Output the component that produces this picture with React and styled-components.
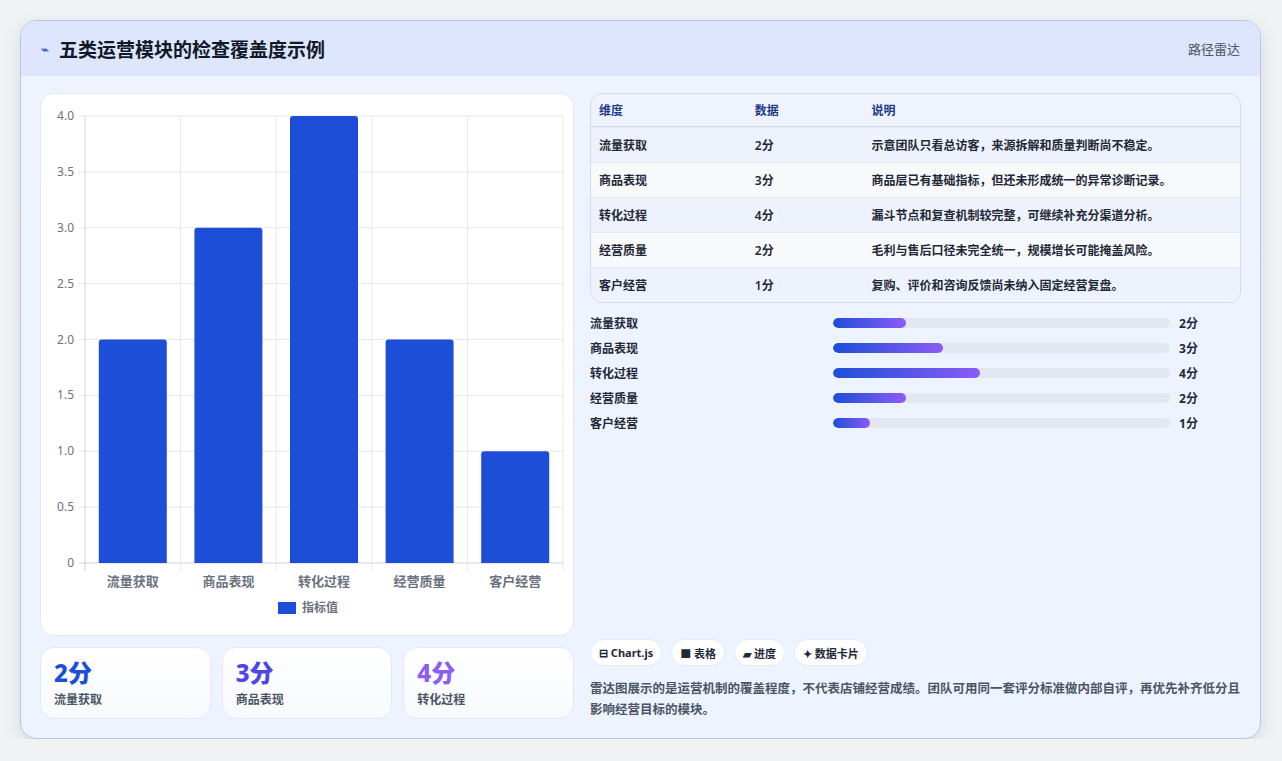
import React from "react";
import styled, { createGlobalStyle } from "styled-components";

const rows = [
  { name: "流量获取", value: 2, note: "示意团队只看总访客，来源拆解和质量判断尚不稳定。" },
  { name: "商品表现", value: 3, note: "商品层已有基础指标，但还未形成统一的异常诊断记录。" },
  { name: "转化过程", value: 4, note: "漏斗节点和复查机制较完整，可继续补充分渠道分析。" },
  { name: "经营质量", value: 2, note: "毛利与售后口径未完全统一，规模增长可能掩盖风险。" },
  { name: "客户经营", value: 1, note: "复购、评价和咨询反馈尚未纳入固定经营复盘。" },
];

const Chart = () => {
  const left = 44, right = 522, top = 22, bottom = 469;
  const step = (right - left) / 5;
  const yOf = (v) => bottom - (v / 4) * (bottom - top);
  const ticks = [0, 0.5, 1, 1.5, 2, 2.5, 3, 3.5, 4];
  return (
    <svg width="534" height="543" viewBox="0 0 534 543">
      {ticks.map((t) => (
        <g key={t}>
          <line x1={left - 6} x2={right} y1={yOf(t)} y2={yOf(t)} stroke={t === 0 ? "#cbd2dd" : "#e5e7eb"} />
          <text x={left - 11} y={yOf(t) + 4} textAnchor="end" fontSize="12" fill="#6b7280">
            {t === 0 ? "0" : t.toFixed(1)}
          </text>
        </g>
      ))}
      {[0, 1, 2, 3, 4, 5].map((i) => (
        <line key={i} x1={left + i * step} x2={left + i * step} y1={top} y2={bottom + 8} stroke={i === 0 ? "#cbd2dd" : "#e5e7eb"} />
      ))}
      {rows.map((r, i) => {
        const x = left + i * step + (step - 68) / 2;
        return (
          <g key={r.name}>
            <path d={`M${x} ${bottom} V${yOf(r.value) + 3} q0 -3 3 -3 h62 q3 0 3 3 V${bottom}Z`} fill="#1d4ed8" />
            <text x={left + i * step + step / 2} y={bottom + 23} textAnchor="middle" fontSize="13" fontWeight="600" fill="#6b7280">
              {r.name}
            </text>
          </g>
        );
      })}
      <rect x="237" y="508" width="18" height="12" fill="#1d4ed8" />
      <text x="261" y="518" fontSize="12" fontWeight="600" fill="#6b7280">指标值</text>
    </svg>
  );
};

const App = () => (
  <>
    <Global />
    <Card>
      <Header>
        <Title>
          <Spark>⌁</Spark>五类运营模块的检查覆盖度示例
        </Title>
        <Tag>路径雷达</Tag>
      </Header>
      <Body>
        <LeftCol>
          <ChartBox>
            <Chart />
          </ChartBox>
          <Stats>
            {rows.slice(0, 3).map((r, i) => (
              <Stat key={r.name}>
                <StatValue $tone={i}>{r.value}分</StatValue>
                <StatLabel>{r.name}</StatLabel>
              </Stat>
            ))}
          </Stats>
        </LeftCol>
        <RightCol>
          <Table>
            <thead>
              <tr>
                <Th style={{ width: "24%" }}>维度</Th>
                <Th style={{ width: "18%" }}>数据</Th>
                <Th>说明</Th>
              </tr>
            </thead>
            <tbody>
              {rows.map((r, i) => (
                <Tr key={r.name} $odd={i % 2 === 1}>
                  <Td>{r.name}</Td>
                  <Td>{r.value}分</Td>
                  <Td>{r.note}</Td>
                </Tr>
              ))}
            </tbody>
          </Table>
          <Bars>
            {rows.map((r) => (
              <BarRow key={r.name}>
                <BarLabel>{r.name}</BarLabel>
                <Track>
                  <Fill style={{ width: `${r.value * 10.9}%` }} />
                </Track>
                <BarValue>{r.value}分</BarValue>
              </BarRow>
            ))}
          </Bars>
          <Spacer />
          <Chips>
            <Chip>⊟ Chart.js</Chip>
            <Chip>■ 表格</Chip>
            <Chip>▰ 进度</Chip>
            <Chip>✦ 数据卡片</Chip>
          </Chips>
          <Note>
            雷达图展示的是运营机制的覆盖程度，不代表店铺经营成绩。团队可用同一套评分标准做内部自评，再优先补齐低分且影响经营目标的模块。
          </Note>
        </RightCol>
      </Body>
    </Card>
  </>
);

export default App;

const Global = createGlobalStyle`
  body {
    margin: 0;
    background: #f1f2f4;
    font-family: "Noto Sans", "Noto Sans CJK SC", sans-serif;
  }
`;

const Card = styled.div`
  width: 1241px;
  height: 719px;
  margin: 20px 0 0 20px;
  box-sizing: border-box;
  border: 1px solid #b8c4ec;
  border-radius: 16px;
  overflow: hidden;
  background: linear-gradient(180deg, #eef3fe, #edf4ff);
  box-shadow: 0 6px 18px rgba(40, 50, 90, 0.12);
  display: flex;
  flex-direction: column;
`;

const Header = styled.div`
  height: 55px;
  flex-shrink: 0;
  background: #dde6fd;
  display: flex;
  align-items: center;
  justify-content: space-between;
  padding: 0 20px 0 20px;
`;

const Title = styled.div`
  font-size: 19px;
  font-weight: 700;
  color: #111827;
  display: flex;
  align-items: center;
  gap: 10px;
`;

const Spark = styled.span`
  color: #4f5fd8;
  font-size: 13px;
`;

const Tag = styled.div`
  font-size: 13px;
  color: #4b5563;
`;

const Body = styled.div`
  flex: 1;
  display: flex;
  gap: 16px;
  padding: 17px 19px 18px 19px;
`;

const LeftCol = styled.div`
  width: 534px;
  display: flex;
  flex-direction: column;
  gap: 11px;
`;

const ChartBox = styled.div`
  height: 543px;
  background: #fff;
  border: 1px solid #e3e8f4;
  border-radius: 14px;
  box-sizing: border-box;
  overflow: hidden;
`;

const Stats = styled.div`
  display: grid;
  grid-template-columns: repeat(3, 1fr);
  gap: 11px;
`;

const Stat = styled.div`
  height: 72px;
  box-sizing: border-box;
  border: 1px solid #e3e8f4;
  border-radius: 14px;
  background: linear-gradient(180deg, #fff, #f8faff);
  padding: 10px 13px;
`;

const tones = ["#1d4ed8", "#4f46e5", "#8b5cf6"];
const StatValue = styled.div`
  font-size: 24px;
  font-weight: 800;
  line-height: 30px;
  color: ${(p) => tones[p.$tone]};
`;

const StatLabel = styled.div`
  font-size: 12px;
  font-weight: 600;
  color: #4b5563;
  margin-top: 2px;
`;

const RightCol = styled.div`
  flex: 1;
  display: flex;
  flex-direction: column;
`;

const Table = styled.table`
  width: 100%;
  border-collapse: separate;
  border-spacing: 0;
  border: 1px solid #d3dbe9;
  border-radius: 12px;
  overflow: hidden;
  font-size: 12px;
`;

const Th = styled.th`
  text-align: left;
  height: 32px;
  padding: 0 8px;
  color: #1e3a8a;
  font-weight: 700;
  border-bottom: 1px solid #d3dbe9;
`;

const Tr = styled.tr`
  background: ${(p) => (p.$odd ? "#f7f9fd" : "#eef2fc")};
`;

const Td = styled.td`
  height: 34px;
  padding: 0 8px;
  color: #1f2937;
  font-weight: 600;
  border-top: 1px solid #e5eaf3;
`;

const Bars = styled.div`
  margin-top: 10px;
  display: flex;
  flex-direction: column;
  gap: 6px;
`;

const BarRow = styled.div`
  display: grid;
  grid-template-columns: 243px 337px 1fr;
  align-items: center;
  gap: 0;
  height: 19px;
`;

const BarLabel = styled.div`
  font-size: 12px;
  font-weight: 600;
  color: #1f2937;
`;

const Track = styled.div`
  height: 10px;
  border-radius: 5px;
  background: #e3e7ef;
  overflow: hidden;
`;

const Fill = styled.div`
  height: 100%;
  border-radius: 5px;
  background: linear-gradient(90deg, #1d4ed8, #8b5cf6);
`;

const BarValue = styled.div`
  font-size: 12px;
  font-weight: 700;
  color: #1f2937;
  padding-left: 9px;
`;

const Spacer = styled.div`
  flex: 1;
`;

const Chips = styled.div`
  display: flex;
  gap: 9px;
`;

const Chip = styled.div`
  height: 27px;
  box-sizing: border-box;
  padding: 0 8px;
  display: flex;
  align-items: center;
  border: 1px solid #e5e9f2;
  border-radius: 14px;
  background: #fff;
  font-size: 11px;
  font-weight: 700;
  color: #1f2937;
`;

const Note = styled.p`
  margin: 12px 0 0;
  font-size: 12.5px;
  font-weight: 600;
  line-height: 21px;
  color: #4b5563;
`;
